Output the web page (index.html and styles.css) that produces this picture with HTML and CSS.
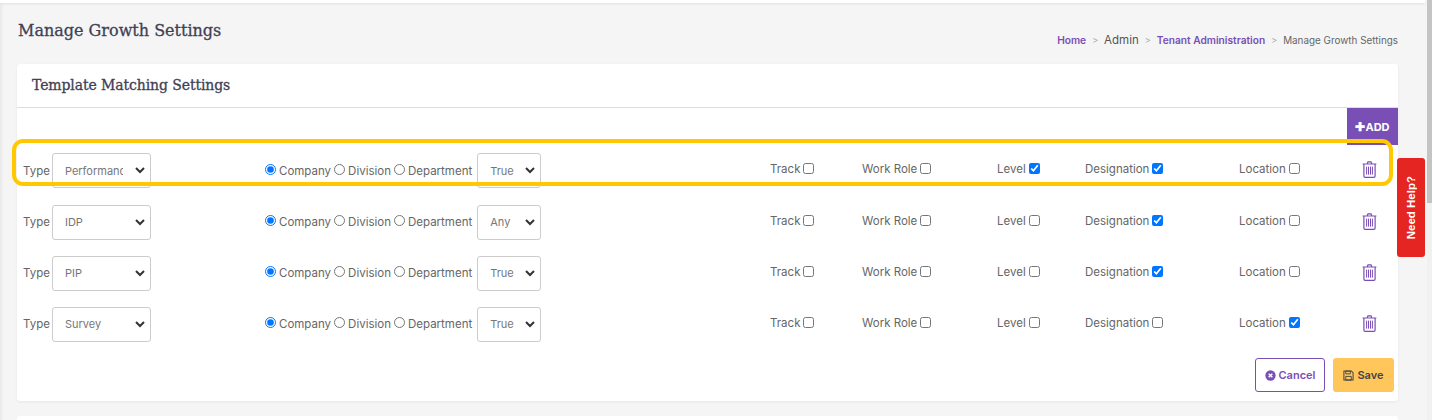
FILE: index.html
```html
<!DOCTYPE html>
<html lang="en">
<head>
<meta charset="utf-8">
<title>Manage Growth Settings</title>
<link rel="stylesheet" href="styles.css">
</head>
<body>
<svg class="defs" width="0" height="0" aria-hidden="true">
  <symbol id="trash" viewBox="0 0 15 17">
    <path d="M5.2 2.6 6 .9h3l.8 1.7M.6 3h13.8M1.9 3v12c0 .8.5 1.3 1.2 1.3h8.8c.7 0 1.2-.5 1.2-1.3V3" fill="none" stroke="currentColor" stroke-width="1.2"/>
    <path d="M4.6 5.6v8M6.5 5.6v8M8.5 5.6v8M10.4 5.6v8" fill="none" stroke="currentColor" stroke-width="1"/>
  </symbol>
</svg>
<div class="topbar"></div>
<main class="content">
  <header class="page-head">
    <h1 class="page-title">Manage Growth Settings</h1>
    <nav class="crumbs">
      <a class="crumb-link">Home</a><span class="sep">&gt;</span>
      <span class="crumb-plain">Admin</span><span class="sep">&gt;</span>
      <a class="crumb-link">Tenant Administration</a><span class="sep">&gt;</span>
      <span class="crumb-current">Manage Growth Settings</span>
    </nav>
  </header>
  <section class="card">
    <h2 class="card-title">Template Matching Settings</h2>
    <div class="toolbar">
      <button class="add-btn"><span class="plus">✚</span>ADD</button>
    </div>
    <div class="rows">
      <div class="highlight"></div>
      <div class="row">
        <div class="type-cell"><span class="label">Type</span><select class="field type-select"><option>Performance</option></select></div>
        <div class="scope-cell">
          <label class="scope"><input type="radio" name="s1" checked>Company</label>
          <label class="scope"><input type="radio" name="s1">Division</label>
          <label class="scope"><input type="radio" name="s1">Department</label>
          <select class="field bool-select"><option>True</option></select>
        </div>
        <label class="check"><span class="check-text">Track</span><input type="checkbox"></label>
        <label class="check"><span class="check-text">Work Role</span><input type="checkbox"></label>
        <label class="check"><span class="check-text">Level</span><input type="checkbox" checked></label>
        <label class="check"><span class="check-text">Designation</span><input type="checkbox" checked></label>
        <label class="check"><span class="check-text">Location</span><input type="checkbox"></label>
        <svg class="trash"><use href="#trash"/></svg>
      </div>
      <div class="row">
        <div class="type-cell"><span class="label">Type</span><select class="field type-select"><option>IDP</option></select></div>
        <div class="scope-cell">
          <label class="scope"><input type="radio" name="s2" checked>Company</label>
          <label class="scope"><input type="radio" name="s2">Division</label>
          <label class="scope"><input type="radio" name="s2">Department</label>
          <select class="field bool-select"><option>Any</option></select>
        </div>
        <label class="check"><span class="check-text">Track</span><input type="checkbox"></label>
        <label class="check"><span class="check-text">Work Role</span><input type="checkbox"></label>
        <label class="check"><span class="check-text">Level</span><input type="checkbox"></label>
        <label class="check"><span class="check-text">Designation</span><input type="checkbox" checked></label>
        <label class="check"><span class="check-text">Location</span><input type="checkbox"></label>
        <svg class="trash"><use href="#trash"/></svg>
      </div>
      <div class="row">
        <div class="type-cell"><span class="label">Type</span><select class="field type-select"><option>PIP</option></select></div>
        <div class="scope-cell">
          <label class="scope"><input type="radio" name="s3" checked>Company</label>
          <label class="scope"><input type="radio" name="s3">Division</label>
          <label class="scope"><input type="radio" name="s3">Department</label>
          <select class="field bool-select"><option>True</option></select>
        </div>
        <label class="check"><span class="check-text">Track</span><input type="checkbox"></label>
        <label class="check"><span class="check-text">Work Role</span><input type="checkbox"></label>
        <label class="check"><span class="check-text">Level</span><input type="checkbox"></label>
        <label class="check"><span class="check-text">Designation</span><input type="checkbox" checked></label>
        <label class="check"><span class="check-text">Location</span><input type="checkbox"></label>
        <svg class="trash"><use href="#trash"/></svg>
      </div>
      <div class="row">
        <div class="type-cell"><span class="label">Type</span><select class="field type-select"><option>Survey</option></select></div>
        <div class="scope-cell">
          <label class="scope"><input type="radio" name="s4" checked>Company</label>
          <label class="scope"><input type="radio" name="s4">Division</label>
          <label class="scope"><input type="radio" name="s4">Department</label>
          <select class="field bool-select"><option>True</option></select>
        </div>
        <label class="check"><span class="check-text">Track</span><input type="checkbox"></label>
        <label class="check"><span class="check-text">Work Role</span><input type="checkbox"></label>
        <label class="check"><span class="check-text">Level</span><input type="checkbox"></label>
        <label class="check"><span class="check-text">Designation</span><input type="checkbox"></label>
        <label class="check"><span class="check-text">Location</span><input type="checkbox" checked></label>
        <svg class="trash"><use href="#trash"/></svg>
      </div>
    </div>
    <div class="actions">
      <button class="btn btn-cancel">
        <svg class="btn-icon" viewBox="0 0 12 12"><circle cx="6" cy="6" r="5.6" fill="currentColor"/><path d="M4 4l4 4M8 4l-4 4" stroke="#fff" stroke-width="1.6"/></svg>Cancel
      </button>
      <button class="btn btn-save">
        <svg class="btn-icon" viewBox="0 0 12 12"><path d="M1 1h8l2 2v8H1z" fill="none" stroke="currentColor" stroke-width="1.1"/><path d="M3 1.2h5v3H3z" fill="none" stroke="currentColor"/><path d="M3 7h6v4H3z" fill="none" stroke="currentColor"/></svg>Save
      </button>
    </div>
  </section>
  <section class="card-next"></section>
</main>
<aside class="help-tab"><span class="help-text">Need Help?</span></aside>
<div class="scrollbar"><div class="thumb"></div></div>
</body>
</html>
```
FILE: styles.css
```css
* { box-sizing: border-box; }
html, body { height: 100%; }
body {
  margin: 0;
  height: 420px;
  overflow: hidden;
  background: #f5f5f5;
  font-family: "Inter", "Liberation Sans", sans-serif;
  color: #666;
  position: relative;
}
.defs { position: absolute; }
.topbar {
  height: 3px;
  width: 1425px;
  background: #fff;
  box-shadow: 0 1px 3px rgba(0,0,0,.08);
}
.content {
  width: 1425px;
  padding: 0 27px 0 17px;
  box-shadow: inset 3px 0 3px -1px rgba(0,0,0,.05);
}
.page-head {
  height: 61px;
  display: flex;
  justify-content: space-between;
  align-items: flex-start;
}
.page-title {
  margin: 17px 0 0 1px;
  font: 400 16px/21px "DejaVu Serif", serif;
  color: #3f4254;
  -webkit-text-stroke: .3px #3f4254;
}
.crumbs {
  margin-top: 30px;
  display: flex;
  align-items: center;
  font-size: 10px;
  line-height: 14px;
  color: #555;
}
.crumb-link { color: #7a4fb5; font-weight: 600; font-size: 10.2px; }
.crumb-plain { font-size: 11.5px; color: #555; }
.crumb-current { color: #666; font-size: 9.9px; }
.sep { color: #aaa; margin: 0 6px; font-size: 9px; }
.card {
  position: relative;
  height: 337px;
  background: #fff;
  border-radius: 3px;
  box-shadow: 0 1px 3px rgba(0,0,0,.06);
}
.card-title {
  margin: 0;
  height: 44px;
  padding: 11px 15px 0;
  font: 400 14px/20px "DejaVu Serif", serif;
  color: #3f4254;
  -webkit-text-stroke: .3px #3f4254;
  border-bottom: 1px solid #ddd;
  letter-spacing: -.1px;
}
.toolbar {
  display: flex;
  justify-content: flex-end;
  height: 37px;
}
.add-btn {
  width: 51px;
  height: 37px;
  border: 0;
  padding: 0;
  background: #7a4fb5;
  color: #fff;
  font: 700 11px "Inter", sans-serif;
}
.plus { font-size: 12px; }
.rows {
  position: relative;
  padding: 8.4px 0 0 6px;
}
.highlight {
  position: absolute;
  left: -5px;
  top: -6px;
  width: 1381px;
  height: 47px;
  border: 4px solid #ffc800;
  border-radius: 11px;
  pointer-events: none;
}
.row {
  display: grid;
  grid-template-columns: 242px 505px 92px 135px 88px 154px 123px 15px;
  align-items: center;
  height: 35px;
  margin-bottom: 16.2px;
  font-size: 11.5px;
  color: #666;
}
.type-cell, .scope-cell { display: flex; align-items: center; }
.label { margin-right: 2px; }
.field {
  appearance: none;
  height: 35px;
  border: 1px solid #ccc;
  border-radius: 3px;
  font: 11px "Inter", sans-serif;
  color: #777;
  padding: 0 27px 0 12px;
  background: #fff url("data:image/svg+xml,%3Csvg xmlns='http://www.w3.org/2000/svg' width='10' height='7' viewBox='0 0 10 7'%3E%3Cpath d='M1 1l4 4 4-4' fill='none' stroke='%23333' stroke-width='2'/%3E%3C/svg%3E") no-repeat right 5px center;
}
.type-select { width: 99px; }
.bool-select { width: 64px; margin-left: 5px; padding-right: 20px; }
.scope { display: inline-flex; align-items: center; margin-right: 3px; }
.scope input { width: 11px; height: 11px; margin: 0 3px 3px 0; }
.scope:nth-child(3) { margin-right: 0; }
.check { display: inline-flex; align-items: center; }
.check input { width: 11px; height: 11px; margin: 0 0 4px 3px; }
.check-text { margin-bottom: 3px; }
.trash { width: 15px; height: 17px; color: #7a4fb5; margin-bottom: 2px; }
.actions {
  position: absolute;
  right: 4px;
  bottom: 9px;
  display: flex;
  gap: 8px;
}
.btn {
  height: 34px;
  border-radius: 3px;
  font: 600 11px "Inter", sans-serif;
  display: inline-flex;
  align-items: center;
  justify-content: center;
  gap: 3px;
  padding: 0;
}
.btn-icon { width: 11px; height: 11px; }
.btn-cancel { width: 70px; background: #fff; border: 1px solid #7a4fb5; color: #7a4fb5; }
.btn-save { width: 61px; background: #ffc65c; border: 0; color: #444; }
.card-next {
  margin-top: 15px;
  height: 20px;
  background: #fff;
  border-radius: 3px;
}
.help-tab {
  position: absolute;
  left: 1397px;
  top: 158px;
  width: 28px;
  height: 99px;
  background: #e52521;
  border-radius: 3px;
  display: flex;
  align-items: center;
  justify-content: center;
}
.help-text {
  writing-mode: vertical-rl;
  transform: rotate(180deg);
  font: 700 11.5px "Liberation Sans", sans-serif;
  color: #fff;
}
.scrollbar {
  position: absolute;
  right: 0;
  top: 0;
  width: 5px;
  height: 420px;
  background: #f1f1f1;
}
.thumb { height: 203px; background: #c4c4c4; }
```
